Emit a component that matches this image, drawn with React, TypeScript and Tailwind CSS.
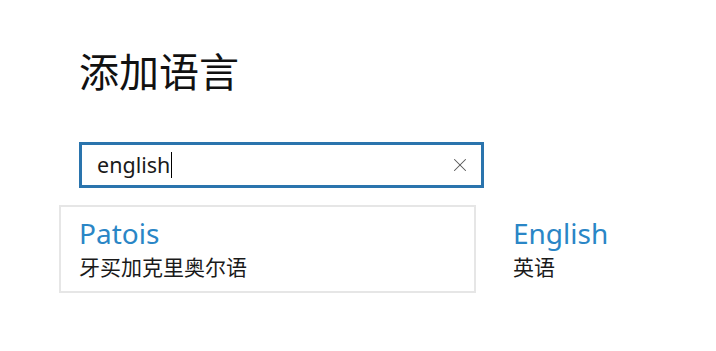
import { X } from 'lucide-react'

const sans = { fontFamily: '"Noto Sans", "Noto Sans CJK SC", sans-serif' }

function LangItem({ name, native, boxed }: { name: string; native: string; boxed?: boolean }) {
  return (
    <div
      className={
        'flex flex-col px-[18px] pt-[10px] pb-[12px] border-2 ' +
        (boxed ? 'w-[417px] border-[#e6e6e6]' : 'border-transparent')
      }
    >
      <span className="text-[28px] leading-[33px] text-[#2a86c6]">{name}</span>
      <span className="mt-[5px] text-[21px] leading-[24px] text-[#1a1a1a]">{native}</span>
    </div>
  )
}

export default function App() {
  return (
    <div className="min-h-screen bg-white" style={sans}>
      <div className="pl-[79px] pt-[52px]">
        <h1 className="text-[40px] leading-[40px] font-normal text-[#111]">添加语言</h1>

        <div className="mt-[50px] w-[405px] h-[46px] border-[3px] border-[#2a74ad] flex items-center pl-[15px] pr-[10px]">
          <span className="text-[21.5px] leading-none text-[#1a1a1a]">english</span>
          <span className="ml-[1px] w-px h-[26px] bg-black" />
          <span className="flex-1" />
          <X className="w-[22px] h-[22px] text-[#555]" strokeWidth={1.1} />
        </div>
      </div>

      <div className="ml-[59px] mt-[17px] flex gap-[17px]">
        <LangItem name="Patois" native="牙买加克里奥尔语" boxed />
        <LangItem name="English" native="英语" />
      </div>
    </div>
  )
}
